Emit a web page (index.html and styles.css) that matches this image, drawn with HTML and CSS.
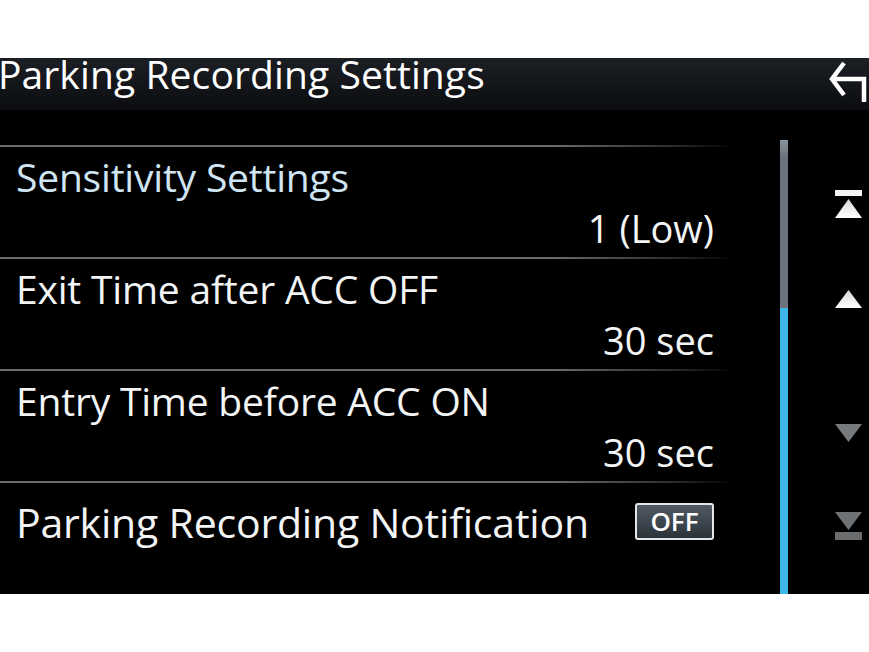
FILE: index.html
```html
<!DOCTYPE html>
<html lang="en">
<head>
    <meta charset="UTF-8">
    <meta name="viewport" content="width=device-width, initial-scale=1.0">
    <title>Parking Recording Settings</title>
    <link rel="stylesheet" href="styles.css">
</head>
<body>
    <div class="screen">
        <header class="topbar">
            <h1 class="title">Parking Recording Settings</h1>
            <button class="back" aria-label="Back">
                <svg width="40" height="42" viewBox="0 0 40 42">
                    <path d="M15 3 L3 19 L15 35 M3 19 H35 V50" fill="none" stroke="#fff" stroke-width="4.5" stroke-linejoin="miter"/>
                </svg>
            </button>
        </header>
        <div class="main">
            <div class="list">
                <div class="row">
                    <div class="label active">Sensitivity Settings</div>
                    <div class="value">1 (Low)</div>
                </div>
                <div class="row">
                    <div class="label">Exit Time after ACC OFF</div>
                    <div class="value">30 sec</div>
                </div>
                <div class="row">
                    <div class="label">Entry Time before ACC ON</div>
                    <div class="value">30 sec</div>
                </div>
                <div class="row row-inline">
                    <div class="label label-big">Parking Recording Notification</div>
                    <button class="toggle">OFF</button>
                </div>
            </div>
            <div class="scrollbar">
                <div class="thumb"></div>
            </div>
            <div class="pager">
                <button class="pg pg-first" aria-label="First page">
                    <svg width="28" height="28" viewBox="0 0 28 28">
                        <defs>
                            <linearGradient id="lite" x1="0" y1="0" x2="0" y2="1">
                                <stop offset="0" stop-color="#d8d8d8"/>
                                <stop offset="1" stop-color="#ffffff"/>
                            </linearGradient>
                        </defs>
                        <rect x="0" y="0" width="27" height="6" fill="#f4f4f4"/>
                        <path d="M13.5 9 L27 28 L0 28 Z" fill="url(#lite)"/>
                    </svg>
                </button>
                <button class="pg pg-up" aria-label="Page up">
                    <svg width="28" height="18" viewBox="0 0 28 18">
                        <path d="M13.5 0 L27 18 L0 18 Z" fill="url(#lite)"/>
                    </svg>
                </button>
                <button class="pg pg-down" aria-label="Page down">
                    <svg width="28" height="18" viewBox="0 0 28 18">
                        <path d="M0 0 L27 0 L13.5 18 Z" fill="#777a7d"/>
                    </svg>
                </button>
                <button class="pg pg-last" aria-label="Last page">
                    <svg width="28" height="28" viewBox="0 0 28 28">
                        <path d="M0 0 L27 0 L13.5 18 Z" fill="#6f7275"/>
                        <rect x="0" y="20" width="27" height="8" fill="#6a6d70"/>
                    </svg>
                </button>
            </div>
        </div>
    </div>
</body>
</html>
```

FILE: styles.css
```css
body {
    margin: 0;
    padding: 0;
    background: #fff;
    font-family: "Open Sans", "Noto Sans", Arial, sans-serif;
    overflow: hidden;
}

.screen {
    margin-top: 58px;
    height: 536px;
    background: #000;
    display: flex;
    flex-direction: column;
}

.topbar {
    height: 52px;
    display: flex;
    justify-content: space-between;
    background: linear-gradient(#1c1f24, #0b0d10);
}

.title {
    margin: 0 0 0 -2px;
    color: #fff;
    font-size: 39px;
    font-weight: 400;
    line-height: 32px;
    letter-spacing: 0.1px;
}

.back {
    background: none;
    border: none;
    padding: 0;
    width: 40px;
    height: 42px;
    overflow: hidden;
    align-self: flex-end;
    margin-bottom: 8px;
}

.main {
    flex: 1;
    display: flex;
}

.list {
    width: 735px;
    padding-top: 35px;
}

.row {
    height: 112px;
    box-sizing: border-box;
    padding: 9px 21px 0 16px;
    background: linear-gradient(to right, #6c6c6c 0%, #6c6c6c 75%, #2a2a2a 92%, transparent 100%) no-repeat top left / 100% 2px;
    display: flex;
    flex-direction: column;
}

.label {
    color: #f2f4f6;
    font-size: 39px;
    line-height: 46px;
    letter-spacing: -0.2px;
}

.label.active {
    color: #cfe5f4;
}

.value {
    color: #f2f4f6;
    font-size: 38px;
    line-height: 46px;
    text-align: right;
    margin-top: 5px;
}

.row-inline {
    flex-direction: row;
    align-items: flex-start;
    justify-content: space-between;
    padding-top: 0;
}

.label-big {
    font-size: 41px;
    line-height: 50px;
    margin-top: 16px;
}

.toggle {
    width: 79px;
    height: 37px;
    margin-top: 22px;
    border: 2px solid #e4e6e8;
    border-radius: 3px;
    background: linear-gradient(#505a64, #2c333a);
    color: #fff;
    font-family: "Open Sans", "Noto Sans", Arial, sans-serif;
    font-size: 26px;
    font-weight: 600;
    padding: 0;
    line-height: 31px;
}

.scrollbar {
    width: 8px;
    margin-left: 45px;
    margin-top: 30px;
    background: #3db6ea;
}

.thumb {
    height: 168px;
    background: linear-gradient(#8a929b, #6b747e 10%, #6b747e);
}

.pager {
    display: flex;
    flex-direction: column;
    padding-left: 47px;
}

.pg {
    background: none;
    border: none;
    padding: 0;
    width: 28px;
    line-height: 0;
}

.pg-first {
    margin-top: 80px;
}

.pg-up {
    margin-top: 72px;
}

.pg-down {
    margin-top: 116px;
}

.pg-last {
    margin-top: 70px;
}
```
